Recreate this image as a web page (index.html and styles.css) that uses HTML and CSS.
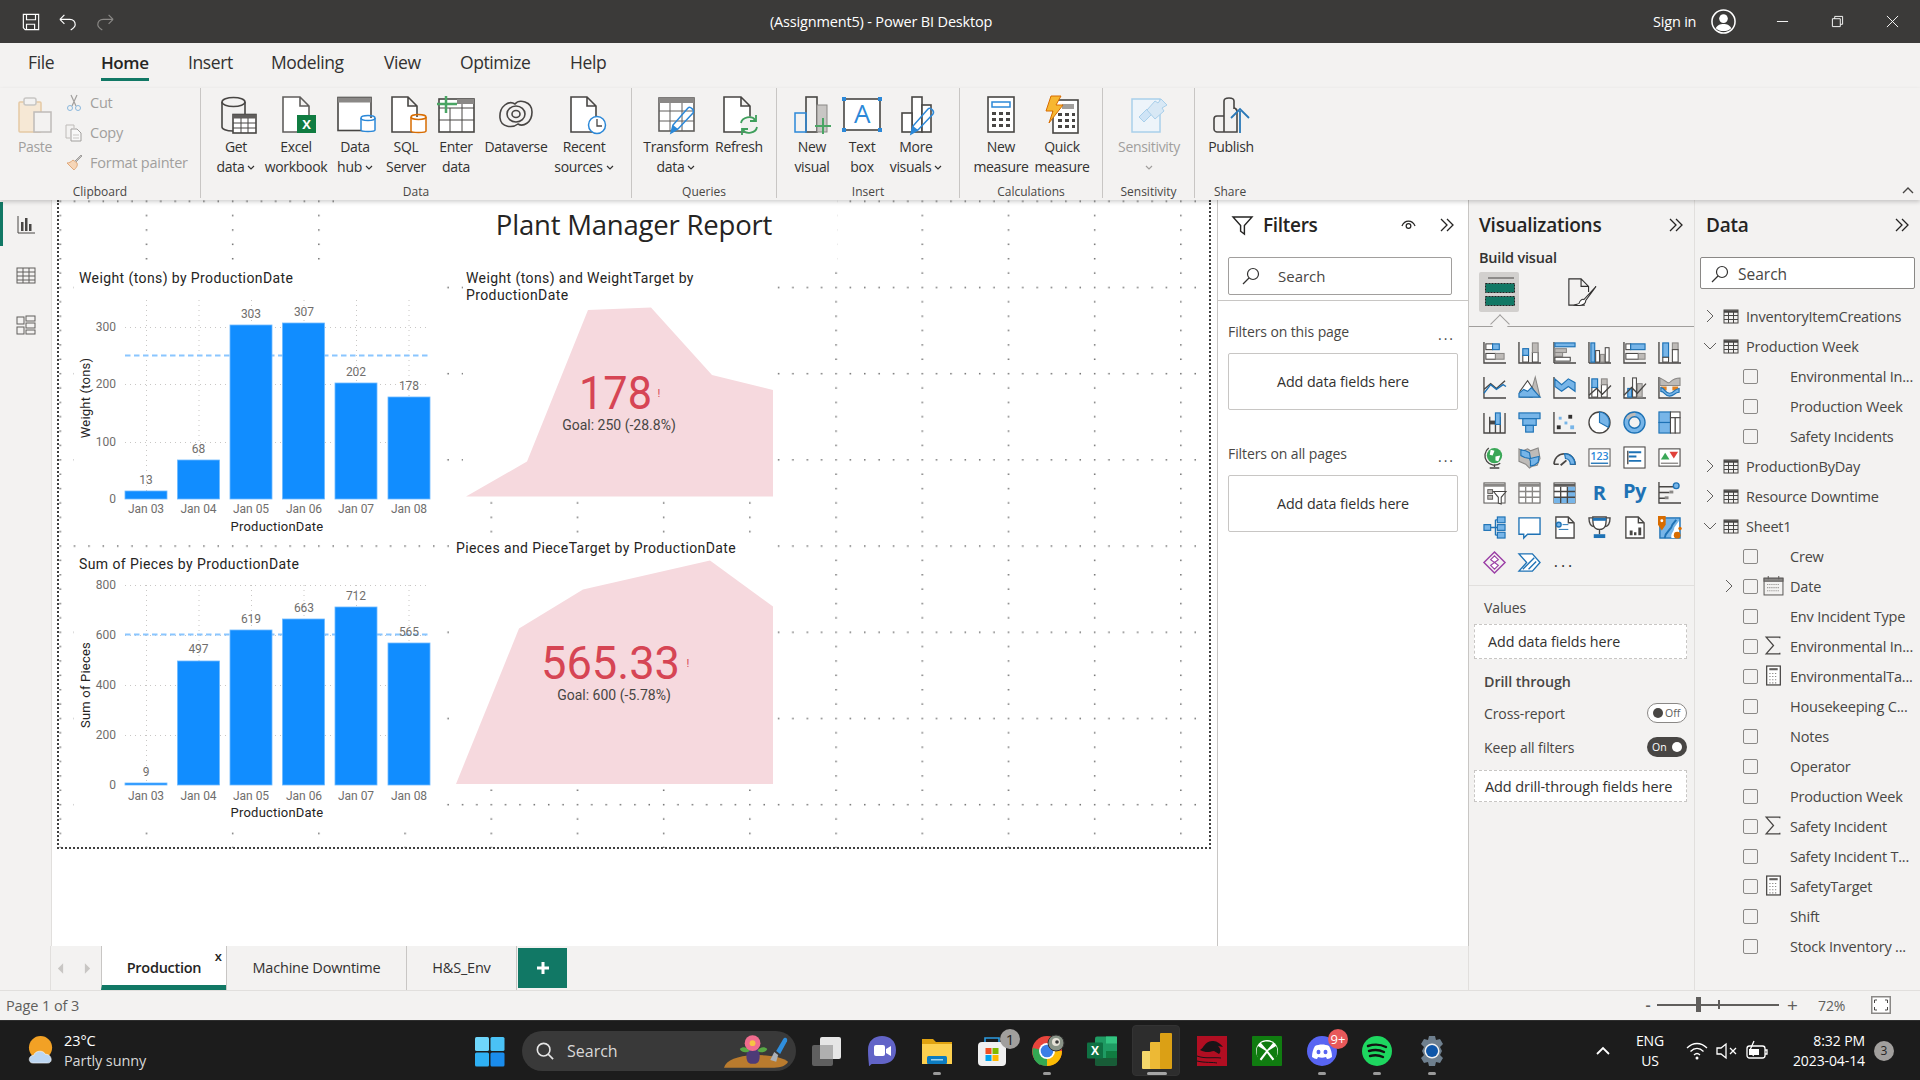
FILE: index.html
```html
<!DOCTYPE html>
<html lang="en">
<head>
<meta charset="utf-8">
<title>(Assignment5) - Power BI Desktop</title>
<link rel="stylesheet" href="styles.css">
</head>
<body>
<header class="titlebar">
  <div class="qat">
    <svg class="qi" viewBox="0 0 20 20"><path d="M1.5 1.5h17v17h-15l-2-2zM5 1.5v6h10v-6M5 18.5v-6h9v6"/></svg>
    <svg class="qi" viewBox="0 0 20 20"><path d="M1 7h11c4 0 6 3 6 6 0 2-2 4-5 6M1 7l5-5M1 7l5 5"/></svg>
    <svg class="qi dim" viewBox="0 0 20 20"><path d="M19 7H8C4 7 2 10 2 13c0 2 2 4 5 6M19 7l-5-5M19 7l-5 5"/></svg>
  </div>
  <div class="wintitle">(Assignment5) - Power BI Desktop</div>
  <div class="winright">
    <span class="signin">Sign in</span>
    <svg class="avatar" viewBox="0 0 26 26"><circle cx="13" cy="13" r="12" fill="none" stroke="#fff" stroke-width="1.6"/><circle cx="13" cy="10" r="4.5" fill="#fff"/><path d="M5 20c2-6 14-6 16 0-4 4-12 4-16 0z" fill="#fff"/></svg>
    <svg class="wb" viewBox="0 0 14 14"><path d="M1 7h12"/></svg>
    <svg class="wb" viewBox="0 0 14 14"><path d="M1.5 4h8.5v8.500H1.500zM4 4V1.500h8.500V10H10"/></svg>
    <svg class="wb" viewBox="0 0 14 14"><path d="M1 1l12 12M13 1L1 13"/></svg>
  </div>
</header>

<nav class="menutabs">
  <span class="mt mt-file">File</span>
  <span class="mt mt-home">Home</span>
  <span class="mt mt-insert">Insert</span>
  <span class="mt mt-modeling">Modeling</span>
  <span class="mt mt-view">View</span>
  <span class="mt mt-optimize">Optimize</span>
  <span class="mt mt-help">Help</span>
</nav>

<section class="ribbon">
  <div class="group g-clip">
    <div class="gbody pad10">
      <div class="rb w50 off">
        <svg class="ri" viewBox="0 0 38 38"><rect x="3" y="6" width="22" height="30" rx="1" fill="#f6e8d5" stroke="#e5c9a4" stroke-width="1.500"/><rect x="8" y="2" width="12" height="7" rx="2" fill="#f3f2f1" stroke="#c8c6c4" stroke-width="1.500"/><rect x="18" y="16" width="17" height="20" fill="#f3f2f1" stroke="#bebbb8" stroke-width="1.500"/></svg>
        <span>Paste</span>
      </div>
      <div class="clipcol off">
        <div class="cliprow"><svg class="si" viewBox="0 0 18 18"><path d="M6 1l5 11M12 1L7 12" stroke="#a19f9d" fill="none" stroke-width="1.200"/><circle cx="5" cy="14" r="2.500" fill="none" stroke="#8ab8dd"/><circle cx="13" cy="14" r="2.500" fill="none" stroke="#8ab8dd"/></svg><span>Cut</span></div>
        <div class="cliprow"><svg class="si" viewBox="0 0 18 18"><path d="M1 1h8v3M1 1v13h4" stroke="#bebbb8" fill="none"/><path d="M6 5h6l4 4v8H6z" fill="#f8f8f8" stroke="#a19f9d"/><path d="M8 11h6M8 14h6" stroke="#c8c6c4"/></svg><span>Copy</span></div>
        <div class="cliprow"><svg class="si" viewBox="0 0 18 18"><path d="M2 9l7 7c2-2 4-4 3-7L8 6C6 8 4 9 2 9z" fill="#f6d6b8" stroke="#e0a87a"/><path d="M10 7l6-6 1 1-6 6" fill="#c8c6c4" stroke="#a19f9d"/></svg><span>Format painter</span></div>
      </div>
    </div>
    <div class="glabel">Clipboard</div>
  </div>

  <div class="group g-data">
    <div class="gbody pad7">
      <div class="rb w56">
        <svg class="ri" viewBox="0 0 38 38"><path class="ik" d="M5 6v25c0 2 4 4 11 4M28 6v12"/><ellipse class="ik" cx="16.500" cy="6" rx="11.500" ry="4.500"/><rect class="ik wf" x="16" y="18.500" width="23" height="18.500"/><rect x="16" y="18.500" width="23" height="4" fill="#605e5c"/><path class="ik thin" d="M16 27h23M16 32h23M24 22v15M31 22v15"/></svg>
        <span>Get<br>data<svg class="chev" viewBox="0 0 8 5"><path d="M1 1l3 3 3-3"/></svg></span>
      </div>
      <div class="rb w64">
        <svg class="ri" viewBox="0 0 38 38"><path class="ik gy wf" d="M6 1h17l9 9v26H6zM23 1v9h9"/><rect x="20" y="19" width="19" height="18" fill="#107c41"/><text class="ixl" x="29.500" y="33">X</text></svg>
        <span>Excel<br>workbook</span>
      </div>
      <div class="rb w54">
        <svg class="ri" viewBox="0 0 38 38"><rect class="ik wf" x="2" y="1.500" width="33" height="33"/><rect x="2" y="1.500" width="33" height="5" fill="#8a8886"/><path class="blue wf" d="M25 22v12c0 2 14 2 14 0V22"/><ellipse class="blue" cx="32" cy="22" rx="7" ry="2.500" fill="#cfe4f6"/></svg>
        <span>Data<br>hub<svg class="chev" viewBox="0 0 8 5"><path d="M1 1l3 3 3-3"/></svg></span>
      </div>
      <div class="rb w48">
        <svg class="ri" viewBox="0 0 38 38"><path class="ik wf" d="M5 1h16l9 9v26H5zM21 1v9h9"/><path class="or wf" d="M24 21v14c0 2 15 2 15 0V21"/><ellipse class="or" cx="31.500" cy="21" rx="7.500" ry="2.500" fill="#fbe3cc"/></svg>
        <span>SQL<br>Server</span>
      </div>
      <div class="rb w52">
        <svg class="ri" viewBox="0 0 38 38"><rect class="ik wf" x="2" y="3" width="35" height="33"/><rect x="20" y="3" width="17" height="5" fill="#8a8886"/><path class="ik thin" d="M2 12h35M2 24h35M13 12v24M25 8v28"/><path d="M9 0v17M0 8h20" stroke="#4aa564" stroke-width="2.500" fill="none"/></svg>
        <span>Enter<br>data</span>
      </div>
      <div class="rb w68">
        <svg class="ri" viewBox="0 0 38 38"><path class="ik" d="M3 22C2 10 12 4 18 8c4-5 17-3 17 8 0 11-9 15-14 12-5 4-17 4-18-6z"/><ellipse class="ik" cx="19" cy="18" rx="9" ry="8"/><ellipse class="ik" cx="19" cy="18" rx="4" ry="3.500"/></svg>
        <span>Dataverse</span>
      </div>
      <div class="rb w68">
        <svg class="ri" viewBox="0 0 38 38"><path class="ik wf" d="M6 1h16l9 9v26H6zM22 1v9h9"/><circle class="blue wf" cx="32" cy="29" r="8.500"/><path d="M32 23v7h5" stroke="#484644" stroke-width="1.300" fill="none"/></svg>
        <span>Recent<br>sources<svg class="chev" viewBox="0 0 8 5"><path d="M1 1l3 3 3-3"/></svg></span>
      </div>
    </div>
    <div class="glabel">Data</div>
  </div>

  <div class="group g-query">
    <div class="gbody pad6">
      <div class="rb w76">
        <svg class="ri" viewBox="0 0 38 38"><rect class="ik wf gy" x="2" y="2" width="35" height="33"/><rect x="2" y="2" width="35" height="5" fill="#8a8886"/><path class="ik thin gy" d="M2 15h35M2 25h35M13 7v28M25 7v28"/><path class="blue" d="M14 37l2-8 15-17c2-2 7 2 5 5L21 33z" fill="#cfe4f6"/><path d="M14 37l2-8 5 4z" fill="#2b88d8"/></svg>
        <span>Transform<br>data<svg class="chev" viewBox="0 0 8 5"><path d="M1 1l3 3 3-3"/></svg></span>
      </div>
      <div class="rb w50">
        <svg class="ri" viewBox="0 0 38 38"><path class="ik wf" d="M4 1h17l9 9v26H4zM21 1v9h9"/><circle cx="29" cy="29" r="8.500" fill="#f3f2f1"/><path class="gr" d="M21 27c1-6 11-8 14-3M37 31c-1 6-11 8-14 3"/><path class="gr" d="M36 19v6h-6M22 39v-6h6"/></svg>
        <span>Refresh</span>
      </div>
    </div>
    <div class="glabel">Queries</div>
  </div>

  <div class="group g-insert">
    <div class="gbody pad10">
      <div class="rb w50">
        <svg class="ri" viewBox="0 0 38 38"><rect class="ik" x="13" y="1" width="11" height="35" fill="#fff"/><rect x="24" y="9" width="10" height="27" fill="#c8c6c4" stroke="#8a8886"/><rect class="blue" x="2" y="17" width="11" height="19" fill="#77b5e8"/><path d="M30 22v16M22 30h16" stroke="#4aa564" stroke-width="2" fill="none"/></svg>
        <span>New<br>visual</span>
      </div>
      <div class="rb w50">
        <svg class="ri" viewBox="0 0 38 38"><rect class="ik wf" x="1" y="3" width="36" height="31"/><rect x="-1" y="1" width="4" height="4" fill="#2b88d8"/><rect x="35" y="1" width="4" height="4" fill="#2b88d8"/><rect x="-1" y="32" width="4" height="4" fill="#2b88d8"/><rect x="35" y="32" width="4" height="4" fill="#2b88d8"/><text class="ia" x="19" y="27">A</text></svg>
        <span>Text<br>box</span>
      </div>
      <div class="rb w58">
        <svg class="ri" viewBox="0 0 38 38"><rect class="ik wf" x="15" y="1" width="10" height="35"/><rect class="ik wf" x="25" y="9" width="9" height="27"/><rect class="ik wf" x="5" y="17" width="10" height="19"/><path class="blue" d="M14 38l2-8 15-17c2-2 7 2 5 5L21 34z" fill="#cfe4f6"/><path d="M14 38l2-8 5 4z" fill="#2b88d8"/></svg>
        <span>More<br>visuals<svg class="chev" viewBox="0 0 8 5"><path d="M1 1l3 3 3-3"/></svg></span>
      </div>
    </div>
    <div class="glabel">Insert</div>
  </div>

  <div class="group g-calc">
    <div class="gbody pad10">
      <div class="rb w62">
        <svg class="ri" viewBox="0 0 38 38"><rect x="6" y="1" width="26" height="35" fill="#fff" stroke="#484644" stroke-width="1.600"/><rect class="blue" x="10" y="6" width="18" height="5" fill="#77b5e8"/><path d="M10 16h4v3h-4zM17 16h4v3h-4zM24 16h4v3h-4zM10 22h4v3h-4zM17 22h4v3h-4zM24 22h4v3h-4zM10 28h4v3h-4zM17 28h4v3h-4zM24 28h4v3h-4z" fill="#484644"/></svg>
        <span>New<br>measure</span>
      </div>
      <div class="rb w60">
        <svg class="ri" viewBox="0 0 38 38"><rect x="10" y="4" width="25" height="33" fill="#fff" stroke="#484644" stroke-width="1.600"/><rect x="19" y="8" width="12" height="5" fill="#a19f9d"/><path d="M15 17h4v3h-4zM22 17h4v3h-4zM29 17h3v3h-3zM15 23h4v3h-4zM22 23h4v3h-4zM29 23h3v3h-3zM15 29h4v3h-4zM22 29h4v3h-4zM29 29h3v3h-3z" fill="#484644"/><path d="M8 0h10l-5 9h7L6 27l4-12H3z" fill="#f7b731" stroke="#d86c00"/></svg>
        <span>Quick<br>measure</span>
      </div>
    </div>
    <div class="glabel">Calculations</div>
  </div>

  <div class="group g-sens">
    <div class="gbody pad5">
      <div class="rb w82 off">
        <svg class="ri" viewBox="0 0 38 38"><path d="M2 3h28v33H2z" fill="#edf4fa" stroke="#a9cfea" stroke-width="1.500"/><path d="M9 21l8-8 5 5-8 8z" fill="#cfe4f6" stroke="#a9cfea"/><path d="M17 14l8-9 3 2 3-4 6 6-5 3 2 3-9 8z" fill="#d8e8f5" stroke="#a9cfea"/></svg>
        <span>Sensitivity<br><svg class="chev" viewBox="0 0 8 5"><path d="M1 1l3 3 3-3"/></svg></span>
      </div>
    </div>
    <div class="glabel">Sensitivity</div>
  </div>

  <div class="group g-share">
    <div class="gbody pad6">
      <div class="rb w60">
        <svg class="ri" viewBox="0 0 38 38"><path class="ik" d="M12 20V5c0-4 10-4 10 0v8M12 20H5c-3 0-3 2-3 3v10c0 2 2 3 3 3h20V15c0-3-3-3-3-2"/><path class="ik" d="M12 20v16"/><path d="M28 37V15M19 22l9-9 9 9" stroke="#2b79b8" stroke-width="1.800" fill="none"/></svg>
        <span>Publish</span>
      </div>
    </div>
    <div class="glabel">Share</div>
  </div>
  <svg class="collapse" viewBox="0 0 12 8"><path d="M1 7l5-5 5 5"/></svg>
</section>

<main class="workspace">
  <div class="mainleft">
    <div class="mainrow">
      <aside class="rail">
        <div class="railitem active"><svg class="rali" viewBox="0 0 20 20"><path d="M2 1v17h17" stroke="#484644" fill="none"/><path d="M5 7h2.500v9H5zM9 3h2.500v13H9zM13 9h2.500v7H13z" fill="#484644"/></svg></div>
        <div class="railitem"><svg class="rali" viewBox="0 0 20 20"><rect x="1" y="3" width="18" height="15" fill="none" stroke="#605e5c"/><path d="M1 7h18M1 11h18M1 15h18M7 3v15M13 3v15" stroke="#605e5c" fill="none"/></svg></div>
        <div class="railitem"><svg class="rali" viewBox="0 0 20 20"><g fill="#f3f2f1" stroke="#605e5c"><rect x="1" y="2" width="7" height="7"/><rect x="10" y="1" width="9" height="5"/><rect x="10" y="8" width="9" height="5"/><rect x="1" y="12" width="7" height="7"/><rect x="10" y="15" width="9" height="4"/></g></svg></div>
      </aside>

      <div class="canvasarea">
        <div class="canvas">
          <svg class="grid" width="1150" height="648" aria-hidden="true">
            <defs>
              <pattern id="dots" x="0.500" y="0.500" width="86.200" height="86.200" patternUnits="userSpaceOnUse">
                <g fill="#6e6e6e">
                  <rect x="0" y="0" width="1.500" height="1.500"/><rect x="14.370" y="0" width="1.500" height="1.500"/><rect x="28.730" y="0" width="1.500" height="1.500"/><rect x="43.100" y="0" width="1.500" height="1.500"/><rect x="57.470" y="0" width="1.500" height="1.500"/><rect x="71.830" y="0" width="1.500" height="1.500"/>
                  <rect x="0" y="14.370" width="1.500" height="1.500"/><rect x="0" y="28.730" width="1.500" height="1.500"/><rect x="0" y="43.100" width="1.500" height="1.500"/><rect x="0" y="57.470" width="1.500" height="1.500"/><rect x="0" y="71.830" width="1.500" height="1.500"/>
                </g>
              </pattern>
            </defs>
            <rect width="1150" height="648" fill="url(#dots)"/>
          </svg>
          <h1 class="reporttitle">Plant Manager Report</h1>

          <svg class="visual v-c1" viewBox="74 262 372 276">
            <text class="vt" x="79" y="283">Weight (tons) by ProductionDate</text>
            <path class="gl" d="M125 327.500h303M125 384.500h303M125 442.500h303M146.500 300v199M199 300v199M251.500 300v199M304 300v199M356.500 300v199M409 300v199"/>
            <g class="yl"><text x="116" y="331">300</text><text x="116" y="388">200</text><text x="116" y="446">100</text><text x="116" y="503">0</text></g>
            <path class="dash" d="M125 355.500h303"/>
            <g class="bar"><rect x="125" y="491" width="42" height="8"/><rect x="177.500" y="460" width="42" height="39"/><rect x="230" y="325" width="42" height="174"/><rect x="282.500" y="323" width="42" height="176"/><rect x="335" y="383" width="42" height="116"/><rect x="388" y="397" width="42" height="102"/></g>
            <g class="lb"><text x="146" y="484">13</text><text x="198.500" y="453">68</text><text x="251" y="318">303</text><text x="304" y="316">307</text><text x="356" y="376">202</text><text x="409" y="390">178</text></g>
            <g class="xl"><text x="146" y="513">Jan 03</text><text x="198.500" y="513">Jan 04</text><text x="251" y="513">Jan 05</text><text x="304" y="513">Jan 06</text><text x="356" y="513">Jan 07</text><text x="409" y="513">Jan 08</text></g>
            <text class="at mid" x="277" y="531">ProductionDate</text>
            <text class="at mid" transform="translate(90 398) rotate(-90)">Weight (tons)</text>
          </svg>

          <svg class="visual v-c2" viewBox="74 552 372 273">
            <text class="vt" x="79" y="569">Sum of Pieces by ProductionDate</text>
            <path class="gl" d="M125 585.500h303M125 635.500h303M125 685.500h303M125 735.500h303M146.500 585v200M199 585v200M251.500 585v200M304 585v200M356.500 585v200M409 585v200"/>
            <g class="yl"><text x="116" y="589">800</text><text x="116" y="639">600</text><text x="116" y="689">400</text><text x="116" y="739">200</text><text x="116" y="789">0</text></g>
            <path class="dash" d="M125 634.500h303"/>
            <g class="bar"><rect x="125" y="783" width="42" height="2"/><rect x="177.500" y="661" width="42" height="124"/><rect x="230" y="630" width="42" height="155"/><rect x="282.500" y="619" width="42" height="166"/><rect x="335" y="607" width="42" height="178"/><rect x="388" y="643" width="42" height="142"/></g>
            <g class="lb"><text x="146" y="776">9</text><text x="198.500" y="653">497</text><text x="251" y="623">619</text><text x="304" y="612">663</text><text x="356" y="600">712</text><text x="409" y="636">565</text></g>
            <g class="xl"><text x="146" y="800">Jan 03</text><text x="198.500" y="800">Jan 04</text><text x="251" y="800">Jan 05</text><text x="304" y="800">Jan 06</text><text x="356" y="800">Jan 07</text><text x="409" y="800">Jan 08</text></g>
            <text class="at mid" x="277" y="817">ProductionDate</text>
            <text class="at mid" transform="translate(90 685) rotate(-90)">Sum of Pieces</text>
          </svg>

          <svg class="visual v-k1" viewBox="463 262 313 238">
            <text class="vt" x="466" y="283">Weight (tons) and WeightTarget by</text>
            <text class="vt" x="466" y="300">ProductionDate</text>
            <polygon class="area" points="466,496.500 527,461.500 588,310 651,307.500 712,375 773,390 773,496.500"/>
            <text class="kpi" x="615.500" y="409" textLength="73" lengthAdjust="spacingAndGlyphs">178</text>
            <text class="bang" x="659" y="397">!</text>
            <text class="goal" x="619" y="430">Goal: 250 (-28.8%)</text>
          </svg>

          <svg class="visual v-k2" viewBox="452 537 324 250">
            <text class="vt" x="456" y="553">Pieces and PieceTarget by ProductionDate</text>
            <polygon class="area" points="456,784 519,628.500 583,589.500 710,560.500 773,606.500 773,784"/>
            <text class="kpi" x="610.500" y="679" textLength="139" lengthAdjust="spacingAndGlyphs">565.33</text>
            <text class="bang" x="688" y="667">!</text>
            <text class="goal" x="614" y="700">Goal: 600 (-5.78%)</text>
          </svg>
        </div>
      </div>

      <aside class="filters">
        <div class="fhead">
          <svg class="funnel" viewBox="0 0 22 20"><path d="M1 1h20l-8 9v9l-4-3v-6z"/></svg>
          <span class="ftitle">Filters</span>
          <svg class="eye" viewBox="0 0 16 12"><path d="M1 7c3-7 11-7 14 0"/><circle cx="8" cy="7" r="2.500"/></svg>
          <svg class="dchev" viewBox="0 0 16 14"><path d="M2 1l6 6-6 6M8 1l6 6-6 6"/></svg>
        </div>
        <div class="fsearchwrap">
          <div class="fsearch"><svg class="mag" viewBox="0 0 18 18"><circle cx="11" cy="7" r="5.500"/><path d="M7 11l-6 6"/></svg><span>Search</span></div>
        </div>
        <div class="flabel fl1"><span>Filters on this page</span><b>...</b></div>
        <div class="fbox">Add data fields here</div>
        <div class="flabel fl2"><span>Filters on all pages</span><b>...</b></div>
        <div class="fbox">Add data fields here</div>
      </aside>
    </div>

    <div class="pagetabs">
      <div class="ptrail"></div>
      <div class="ptnav">
        <svg viewBox="0 0 8 12"><path d="M7 0v12L1 6z"/></svg>
        <svg viewBox="0 0 8 12"><path d="M1 0v12l6-6z"/></svg>
      </div>
      <div class="ptab cur">Production<span class="ptx">x</span></div>
      <div class="ptab t2">Machine Downtime</div>
      <div class="ptab t3">H&amp;S_Env</div>
      <div class="ptadd"><svg viewBox="0 0 14 14"><path d="M7 1v12M1 7h12"/></svg></div>
    </div>
  </div>

  <aside class="viz">
    <div class="phead"><span class="ptitle">Visualizations</span><svg class="dchev" viewBox="0 0 16 14"><path d="M2 1l6 6-6 6M8 1l6 6-6 6"/></svg></div>
    <div class="buildlabel">Build visual</div>
    <div class="panetabs">
      <div class="panesel"><svg viewBox="0 0 32 32"><path d="M5 2h26" stroke="#484644" fill="none"/><rect x="2.500" y="7.500" width="29" height="9" fill="#117865" stroke="#222" stroke-dasharray="2 1"/><rect x="2.500" y="20.500" width="29" height="9" fill="#117865" stroke="#222" stroke-dasharray="2 1"/></svg></div>
      <svg class="panefmt" viewBox="0 0 32 32"><path d="M19 30H2V2h13l8 8v6M15 2v8h8" fill="none" stroke="#323130" stroke-width="1.200"/><path d="M31 10L18 24c-2-1-5 2-5 4-1 1-3 1-5 2 5 1 12 0 12-5z" fill="#fff" stroke="#323130" stroke-width="1.100"/></svg>
      <span class="caret"></span>
    </div>

    <div class="vgrid">
      <svg class="vi" viewBox="0 0 24 24"><path class="k" d="M1 1v22h23"/><rect class="fw" x="3" y="3" width="7" height="6"/><rect class="fb" x="10" y="3" width="7" height="6"/><rect class="fw" x="3" y="13" width="10" height="6"/><rect class="fg" x="13" y="13" width="9" height="6"/></svg>
      <svg class="vi" viewBox="0 0 24 24"><path class="k" d="M1 1v22h23"/><rect class="fw" x="5" y="15" width="6" height="7"/><rect class="fb" x="5" y="8" width="6" height="7"/><rect class="fw" x="15" y="12" width="6" height="10"/><rect class="fg" x="15" y="2" width="6" height="10"/></svg>
      <svg class="vi" viewBox="0 0 24 24"><path class="k" d="M1 23h23M1 1v22"/><rect class="fb" x="2" y="2" width="21" height="4"/><rect class="fg" x="2" y="8" width="12" height="4"/><rect class="fg" x="2" y="12" width="8" height="4"/><rect class="fw" x="2" y="17" width="16" height="4"/></svg>
      <svg class="vi" viewBox="0 0 24 24"><path class="k" d="M1 23h23M1 1v22"/><rect class="fb" x="3" y="2" width="4" height="20"/><rect class="fw" x="8" y="10" width="4" height="12"/><rect class="fg" x="13" y="14" width="4" height="8"/><rect class="fw" x="18" y="7" width="4" height="15"/></svg>
      <svg class="vi" viewBox="0 0 24 24"><path class="k" d="M1 1v22h23"/><rect class="fw" x="3" y="3" width="5" height="6"/><rect class="fb" x="8" y="3" width="15" height="6"/><rect class="fw" x="3" y="13" width="13" height="6"/><rect class="fg" x="16" y="13" width="7" height="6"/></svg>
      <svg class="vi" viewBox="0 0 24 24"><path class="k" d="M1 1v22h23"/><rect class="fb" x="5" y="2" width="6" height="15"/><rect class="fw" x="5" y="17" width="6" height="5"/><rect class="fg" x="15" y="2" width="6" height="7"/><rect class="fw" x="15" y="9" width="6" height="13"/></svg>

      <svg class="vi" viewBox="0 0 24 24"><path class="k" d="M1 1v22h23M1 14l7-6 6 5 9-8"/><path class="b" d="M1 18l7-9 6 5 7-5 3 2"/></svg>
      <svg class="vi" viewBox="0 0 24 24"><path class="fg" d="M12 22l6-21 5 21z"/><path class="fw" d="M2 16l8-11 8 12-3 5H2z"/><path class="fb" d="M1 22v-4l5-4 4 2 4-4 9 10z"/></svg>
      <svg class="vi" viewBox="0 0 24 24"><path class="k" d="M1 1v22h23"/><path class="fb" d="M2 3l7 6 7-6 7 4v9l-7-5-7 5-7-5z"/></svg>
      <svg class="vi" viewBox="0 0 24 24"><path class="k" d="M1 1v22h23"/><rect class="fw" x="4" y="12" width="6" height="10"/><rect class="fb" x="4" y="3" width="6" height="9"/><rect class="fw" x="14" y="9" width="6" height="13"/><rect class="fg" x="14" y="3" width="6" height="6"/><path class="k" d="M1 20l8-7 6 6 9-9"/></svg>
      <svg class="vi" viewBox="0 0 24 24"><path class="k" d="M1 1v22h23"/><rect class="fb" x="5" y="13" width="4" height="9"/><rect class="fw" x="10" y="2" width="4" height="20"/><rect class="fg" x="15" y="8" width="5" height="14"/><path class="k" d="M1 20l8-8 6 6 9-10"/></svg>
      <svg class="vi" viewBox="0 0 24 24"><path class="k" d="M1 1v22h23"/><path class="fg" d="M2 2c7 3 8 7 11 4s5-4 10-4v8H2z"/><rect x="3" y="11" width="6" height="4" fill="#e08020"/><rect x="15" y="11" width="6" height="4" fill="#e08020"/><path class="fb" d="M3 12c5 1 4 6 9 6s4-4 10-5v4c-5 0-5 4-10 4s-5-5-9-5z"/></svg>

      <svg class="vi" viewBox="0 0 24 24"><path class="k" d="M1 2v21h22V2M7 23V6M13 23V12M18 23V6"/><rect x="7" y="10" width="6" height="4" fill="#484644"/><rect class="fb" x="13" y="2" width="5" height="12"/></svg>
      <svg class="vi" viewBox="0 0 24 24"><rect class="fb" x="1" y="2" width="22" height="6"/><rect class="fb" x="5" y="8" width="14" height="7"/><rect class="fb" x="8" y="15" width="8" height="7"/></svg>
      <svg class="vi" viewBox="0 0 24 24"><path class="k" d="M1 1v22h23"/><rect x="4" y="15" width="4" height="4" fill="#323130"/><rect x="16" y="4" width="4" height="4" fill="#323130"/><rect x="6" y="6" width="3" height="3" fill="#77b5e8"/><rect x="12" y="11" width="3" height="3" fill="#77b5e8"/><rect x="18" y="15" width="4" height="4" fill="#77b5e8"/></svg>
      <svg class="vi" viewBox="0 0 24 24"><circle class="k wfill" cx="12" cy="12" r="11"/><path class="fb" d="M12 1a11 11 0 0 1 9 16l-9-5z"/></svg>
      <svg class="vi" viewBox="0 0 24 24"><circle cx="12" cy="12" r="8.500" fill="none" stroke="#77b5e8" stroke-width="5"/><path d="M4 8a9 9 0 0 1 9-4.500" fill="none" stroke="#bebbb8" stroke-width="5"/><circle class="b" cx="12" cy="12" r="11"/><circle class="b" cx="12" cy="12" r="6"/></svg>
      <svg class="vi" viewBox="0 0 24 24"><rect class="fb" x="1" y="1" width="12" height="11"/><rect class="fb" x="1" y="12" width="12" height="11"/><rect class="fw" x="13" y="1" width="10" height="6"/><rect class="fw" x="13" y="7" width="5" height="16"/><rect class="fw" x="18" y="7" width="5" height="16"/></svg>

      <svg class="vi" viewBox="0 0 24 24"><circle cx="12" cy="10" r="8" fill="#3aa757"/><path d="M8 4l4 1-2 5-3-1zM13 11l5-1-2 6-3-1z" fill="#fff"/><path class="k" d="M6 2a10 10 0 0 0 12 16M12 19v3M7 23h10"/></svg>
      <svg class="vi" viewBox="0 0 24 24"><path class="fg" d="M1 3l4 2 5-2 3 2 8-3 2 11-3 7-5 1-3 2-4-4-7-3z"/><path class="fb" d="M3 4l5 1 4 2 1 6 4-1 5-1-1 6-4 3-4 1v-5l-1-3-5-1-4-2z"/></svg>
      <svg class="vi" viewBox="0 0 24 24"><path class="k th16" d="M1 19a11 11 0 0 1 22 0h-5M1 19h5"/><path class="fb" d="M12 8a11 11 0 0 1 11 11h-5a6 6 0 0 0-5-6z"/><path class="k th2" d="M8 20l6-5"/></svg>
      <svg class="vi" viewBox="0 0 24 24"><rect class="fw gs" x="1" y="3" width="22" height="18"/><text class="v123" x="12" y="15">123</text><path class="b" d="M3 18h18"/></svg>
      <svg class="vi" viewBox="0 0 24 24"><rect class="fw" x="1" y="1" width="22" height="22"/><path class="k" d="M5 5v14"/><path d="M6 6.500h13M6 11h8M6 15.500h13" stroke="#1e72b5" stroke-width="2" fill="none"/></svg>
      <svg class="vi" viewBox="0 0 24 24"><rect class="fw" x="1" y="3" width="22" height="18"/><path d="M3 14l4.500-7 4.500 7z" fill="#3aa757"/><path d="M12 6h9l-4.500 7z" fill="#e0403a"/><path class="k lg" d="M3 18h18"/></svg>

      <svg class="vi" viewBox="0 0 24 24"><rect class="fw gs" x="1" y="2" width="22" height="21"/><path d="M1 3h22v3H1z" fill="#8a8886"/><rect x="5" y="9" width="5" height="4" fill="#bebbb8" stroke="#605e5c"/><rect x="5" y="15" width="5" height="4" fill="#bebbb8" stroke="#605e5c"/><path class="fw" d="M11 11h13l-5 6v7l-3-1v-6z"/></svg>
      <svg class="vi" viewBox="0 0 24 24"><rect class="fw gs" x="1" y="2" width="22" height="21"/><path d="M1 3h22v3H1z" fill="#8a8886"/><path class="k lg" d="M1 11h22M1 17h22M8 6v17M15 6v17"/></svg>
      <svg class="vi" viewBox="0 0 24 24"><rect x="1" y="2" width="22" height="21" fill="#fff" stroke="#484644"/><path d="M1 3h22v3H1z" fill="#605e5c"/><path d="M1 17h7v6H1zM8 17h7v6H8zM15 6h8v17h-8z" fill="#77b5e8"/><path class="k" d="M1 11h22M1 17h22M8 6v17M15 6v17"/></svg>
      <svg class="vi" viewBox="0 0 24 24"><text class="vr" x="12" y="20">R</text></svg>
      <svg class="vi" viewBox="0 0 24 24"><text class="vpy" x="12" y="18">Py</text></svg>
      <svg class="vi" viewBox="0 0 24 24"><path class="k" d="M1 1v22h23M1 6h15M1 12h11M1 18h7"/><circle class="b lf" cx="19" cy="5" r="3"/><rect x="12" y="10" width="4" height="3" fill="#8a8886"/><rect x="7" y="16" width="4" height="3" fill="#8a8886"/></svg>

      <svg class="vi" viewBox="0 0 24 24"><rect class="fb" x="1" y="9" width="7" height="6"/><path class="b" d="M8 12h5M13 4v16M13 4h2M13 12h2M13 20h2"/><rect class="fb" x="15" y="1" width="8" height="6"/><rect class="fb" x="15" y="9" width="8" height="6"/><rect class="fb" x="15" y="17" width="8" height="6"/></svg>
      <svg class="vi" viewBox="0 0 24 24"><path class="b wfill" d="M1 2h22v17H10l-4 4v-4H1z"/></svg>
      <svg class="vi" viewBox="0 0 24 24"><path class="k wfill" d="M3 1h13l6 6v16H3zM16 1v6h6"/><circle class="b lf" cx="6" cy="9" r="2.500"/><path d="M10 9h6M6 14h10" stroke="#1e72b5" fill="none"/></svg>
      <svg class="vi" viewBox="0 0 24 24"><path class="k" d="M5 2H1c0 6 2 9 6 9M19 2h4c0 6-2 9-6 9"/><path class="k wfill" d="M5 1h14c0 7 0 13-7 13S5 8 5 1zM12 14v5"/><path d="M5 2h14v3H5z" fill="#1e72b5"/><path d="M6 19h12v4H6z" fill="#1e72b5"/></svg>
      <svg class="vi" viewBox="0 0 24 24"><path class="k wfill" d="M3 1h13l6 6v16H3zM16 1v6h6"/><path d="M7 15h3v5H7zM11.500 17H14v3h-2.500zM16 12h3v8h-3z" fill="#484644"/></svg>
      <svg class="vi" viewBox="0 0 24 24"><rect class="b lf" x="2" y="2" width="21" height="21"/><path d="M14 23c-1-6 3-6 3-11l5-7v18z" fill="#fff"/><path d="M7 23c1-8 7-8 8-14l4-5" fill="none" stroke="#1e72b5" stroke-width="2"/><path d="M0 0h8v9l-4 6-4-6z" fill="#d86c00"/><circle cx="4" cy="5" r="1.500" fill="#fff"/><circle cx="20" cy="20" r="3.500" fill="#d86c00"/><circle cx="23" cy="13" r="1.800" fill="#d86c00"/></svg>

      <svg class="vi" viewBox="0 0 24 24"><path d="M12 1l11 11-11 11L1 12z" fill="none" stroke="#9b3fa6" stroke-width="1.500"/><path d="M12 5l4 4-4 3-4-3zM12 12l4 3-4 4-4-4z" fill="#fff" stroke="#9b3fa6" stroke-width="1.200"/></svg>
      <svg class="vi" viewBox="0 0 24 24"><path class="b wfill" d="M1 3h14l8 9-8 9H1l8-9z"/><path class="b" d="M5 19l12-12M11 19l8-8"/></svg>
      <div class="vmore">...</div>
    </div>

    <div class="vfields">
      <div class="vlabel">Values</div>
      <div class="drop d1">Add data fields here</div>
      <div class="vlabel drillh">Drill through</div>
      <div class="togrow r1"><span>Cross-report</span><span class="toggle offt"><i></i>Off</span></div>
      <div class="togrow r2"><span>Keep all filters</span><span class="toggle ont">On<i></i></span></div>
      <div class="drop d2">Add drill-through fields here</div>
    </div>
  </aside>

  <aside class="data">
    <div class="phead"><span class="ptitle dtitle">Data</span><svg class="dchev" viewBox="0 0 16 14"><path d="M2 1l6 6-6 6M8 1l6 6-6 6"/></svg></div>
    <div class="dsearch"><svg class="mag" viewBox="0 0 18 18"><circle cx="11" cy="7" r="5.500"/><path d="M7 11l-6 6"/></svg><span>Search</span></div>
    <ul class="tree">
      <li class="trow"><svg class="tw" viewBox="0 0 12 14"><path d="M3 1l6 6-6 6"/></svg><svg class="tbl" viewBox="0 0 16 16"><rect x="1" y="2" width="14" height="13"/><path d="M1 3.500h14" class="hdr"/><path d="M1 7.500h14M1 11.500h14M5.500 3v12M10.500 3v12"/></svg><span>InventoryItemCreations</span></li>
      <li class="trow"><svg class="tw open" viewBox="0 0 14 12"><path d="M1 3l6 6 6-6"/></svg><svg class="tbl" viewBox="0 0 16 16"><rect x="1" y="2" width="14" height="13"/><path d="M1 3.500h14" class="hdr"/><path d="M1 7.500h14M1 11.500h14M5.500 3v12M10.500 3v12"/></svg><span>Production Week</span></li>
      <li class="frow"><i class="cb"></i><b class="fi"></b><span>Environmental In...</span></li>
      <li class="frow"><i class="cb"></i><b class="fi"></b><span>Production Week</span></li>
      <li class="frow"><i class="cb"></i><b class="fi"></b><span>Safety Incidents</span></li>
      <li class="trow"><svg class="tw" viewBox="0 0 12 14"><path d="M3 1l6 6-6 6"/></svg><svg class="tbl" viewBox="0 0 16 16"><rect x="1" y="2" width="14" height="13"/><path d="M1 3.500h14" class="hdr"/><path d="M1 7.500h14M1 11.500h14M5.500 3v12M10.500 3v12"/></svg><span>ProductionByDay</span></li>
      <li class="trow"><svg class="tw" viewBox="0 0 12 14"><path d="M3 1l6 6-6 6"/></svg><svg class="tbl" viewBox="0 0 16 16"><rect x="1" y="2" width="14" height="13"/><path d="M1 3.500h14" class="hdr"/><path d="M1 7.500h14M1 11.500h14M5.500 3v12M10.500 3v12"/></svg><span>Resource Downtime</span></li>
      <li class="trow"><svg class="tw open" viewBox="0 0 14 12"><path d="M1 3l6 6 6-6"/></svg><svg class="tbl" viewBox="0 0 16 16"><rect x="1" y="2" width="14" height="13"/><path d="M1 3.500h14" class="hdr"/><path d="M1 7.500h14M1 11.500h14M5.500 3v12M10.500 3v12"/></svg><span>Sheet1</span></li>
      <li class="frow"><i class="cb"></i><b class="fi"></b><span>Crew</span></li>
      <li class="frow hasch"><svg class="tw" viewBox="0 0 12 14"><path d="M3 1l6 6-6 6"/></svg><i class="cb"></i><b class="fi"><svg viewBox="0 0 20 20"><rect x="1" y="3" width="18" height="16" fill="none" stroke="#605e5c"/><path d="M1 3h18v3H1zM5 1v3M15 1v3" fill="#8a8886" stroke="#605e5c"/><path d="M4 9h12M4 12h12M4 15h12" stroke="#8a8886" stroke-dasharray="1 1"/></svg></b><span>Date</span></li>
      <li class="frow"><i class="cb"></i><b class="fi"></b><span>Env Incident Type</span></li>
      <li class="frow"><i class="cb"></i><b class="fi"><svg viewBox="0 0 20 20"><path d="M16 3V2H3l7 8-7 8h13v-1" fill="none" stroke="#484644" stroke-width="1.200"/></svg></b><span>Environmental In...</span></li>
      <li class="frow"><i class="cb"></i><b class="fi"><svg viewBox="0 0 20 20"><rect x="3.500" y="1" width="13" height="18" fill="#fff" stroke="#484644" stroke-width="1.200"/><rect x="6" y="3" width="8" height="2" fill="#605e5c"/><path d="M6 8h8M6 11h8M6 14h8M6 17h8" stroke="#8a8886" stroke-dasharray="1.200 1.500"/></svg></b><span>EnvironmentalTa...</span></li>
      <li class="frow"><i class="cb"></i><b class="fi"></b><span>Housekeeping C...</span></li>
      <li class="frow"><i class="cb"></i><b class="fi"></b><span>Notes</span></li>
      <li class="frow"><i class="cb"></i><b class="fi"></b><span>Operator</span></li>
      <li class="frow"><i class="cb"></i><b class="fi"></b><span>Production Week</span></li>
      <li class="frow"><i class="cb"></i><b class="fi"><svg viewBox="0 0 20 20"><path d="M16 3V2H3l7 8-7 8h13v-1" fill="none" stroke="#484644" stroke-width="1.200"/></svg></b><span>Safety Incident</span></li>
      <li class="frow"><i class="cb"></i><b class="fi"></b><span>Safety Incident T...</span></li>
      <li class="frow"><i class="cb"></i><b class="fi"><svg viewBox="0 0 20 20"><rect x="3.500" y="1" width="13" height="18" fill="#fff" stroke="#484644" stroke-width="1.200"/><rect x="6" y="3" width="8" height="2" fill="#605e5c"/><path d="M6 8h8M6 11h8M6 14h8M6 17h8" stroke="#8a8886" stroke-dasharray="1.200 1.500"/></svg></b><span>SafetyTarget</span></li>
      <li class="frow"><i class="cb"></i><b class="fi"></b><span>Shift</span></li>
      <li class="frow"><i class="cb"></i><b class="fi"></b><span>Stock Inventory ...</span></li>
    </ul>
  </aside>
</main>

<footer class="status">
  <span class="pageof">Page 1 of 3</span>
  <div class="zoomctl">
    <span class="zm">-</span>
    <div class="slider"><i class="thumb"></i><i class="tick"></i></div>
    <span class="zp">+</span>
    <span class="zpct">72%</span>
    <svg class="fit" viewBox="0 0 20 18"><rect x="0.750" y="0.750" width="18.500" height="16.500" fill="#fff" stroke="#8a8886" stroke-width="1.500"/><path d="M6 4H3.500v3M14 4h2.500v3M6 14H3.500v-3M14 14h2.500v-3" fill="none" stroke="#484644"/></svg>
  </div>
</footer>

<footer class="taskbar">
  <div class="weather">
    <svg class="wicon" viewBox="0 0 30 30"><circle cx="14" cy="12" r="12" fill="#f2a125"/><path d="M6 28c-5 0-5-8 1-8 1-5 10-6 12-1 6-1 9 9 2 9z" fill="#bcd6f2" stroke="#fff" stroke-width=".6"/></svg>
    <div class="wtext"><span>23°C</span><span>Partly sunny</span></div>
  </div>
  <div class="slot"><svg class="tbi" viewBox="0 0 30 30"><rect x="0" y="1" width="14" height="14" rx="1.500" fill="#6fd6fb"/><rect x="15.500" y="1" width="14" height="14" rx="1.500" fill="#4ac2f6"/><rect x="0" y="16.500" width="14" height="14" rx="1.500" fill="#2fb0f3"/><rect x="15.500" y="16.500" width="14" height="14" rx="1.500" fill="#1a8cec"/></svg></div>
  <div class="tsearch">
    <svg class="tmag" viewBox="0 0 20 20"><circle cx="8.500" cy="8.500" r="7"/><path d="M13.500 13.500l5.500 5.500"/></svg>
    <span>Search</span>
    <svg class="flower" viewBox="0 0 66 34"><path d="M0 33c2-8 14-12 30-13 14 0 30 2 35 7-2 4-7 6-14 6z" fill="#b97b2e"/><path d="M24 14c-2 6-2 14 3 15h5c5-1 5-9 3-15z" fill="#4d3b77"/><path d="M16 14c3-3 8-2 10 2-3 2-8 2-10-2zM34 16c2-4 7-5 10-2-2 4-7 4-10 2z" fill="#58a845"/><circle cx="29" cy="8" r="8" fill="#f06c8e"/><circle cx="29" cy="8" r="3" fill="#f6c343"/><path d="M47 25l4-8 4 3-2 7z" fill="#aab1b8"/><path d="M53 16l7-12c2-3 5-1 4 2l-7 13z" fill="#2f8fde"/></svg>
  </div>
  <div class="slot"><svg class="tbi" viewBox="0 0 30 30"><rect x="0" y="9" width="21" height="21" rx="2" fill="#5f5f5f"/><rect x="8" y="1" width="21" height="22" rx="2" fill="#e6e6e6"/><rect x="8" y="9" width="13" height="14" fill="#b0b0b0"/></svg></div>
  <div class="slot"><svg class="tbi" viewBox="0 0 30 30"><path d="M1 14C1 5 7 0 15 0s14 5 14 14c0 9-6 14-14 14H5c-1 0-2 2-3 2 0-3-1-8-1-16z" fill="#6264c7"/><rect x="7" y="9" width="11" height="11" rx="2" fill="#fff"/><path d="M19 13l5-3v10l-5-3z" fill="#fff"/></svg></div>
  <div class="slot run"><svg class="tbi" viewBox="0 0 30 30"><path d="M0 3h11l3 3h16v22H0z" fill="#e0a210"/><path d="M0 8h30v20H0z" fill="#fdd04f"/><rect x="5" y="22" width="20" height="6" fill="#f5b61c"/><rect x="5" y="20" width="20" height="8" rx="1.500" fill="#0d7cc1"/><rect x="9" y="23" width="12" height="1.500" fill="#9fd3ef"/></svg></div>
  <div class="slot"><svg class="tbi" viewBox="0 0 30 30"><rect x="1" y="6" width="28" height="24" rx="4" fill="#f0f0f0"/><path d="M8 6V2h14v4" fill="none" stroke="#2b9be0" stroke-width="1.600"/><rect x="8.500" y="12" width="6" height="6" fill="#f25022"/><rect x="15.500" y="12" width="6" height="6" fill="#7fba00"/><rect x="8.500" y="19" width="6" height="6" fill="#00a4ef"/><rect x="15.500" y="19" width="6" height="6" fill="#ffb900"/></svg><span class="badge bg">1</span></div>
  <div class="slot run"><svg class="tbi" viewBox="0 0 30 30"><circle cx="15" cy="15" r="15" fill="#e8453c"/><path d="M15 15L2 23A15 15 0 0 0 15 30z" fill="#34a853"/><path d="M1 12c-2 7 2 14 7 17l7-14z" fill="#34a853"/><path d="M15 15h15c0 9-7 15-15 15z" fill="#fbbc05"/><circle cx="15" cy="15" r="8" fill="#fff"/><circle cx="15" cy="15" r="6.300" fill="#3b7fe6"/><circle cx="24" cy="7" r="8" fill="#8a9488" stroke="#333"/><circle cx="24" cy="6" r="4" fill="#e6e2d8"/><circle cx="25" cy="6" r="1.800" fill="#3a3a3a"/></svg></div>
  <div class="slot"><svg class="tbi" viewBox="0 0 30 30"><rect x="8" y="0.500" width="22" height="29" rx="2" fill="#1f9b63"/><rect x="19" y="0.500" width="11" height="7" fill="#33c481"/><rect x="19" y="15" width="11" height="7" fill="#107c41"/><rect x="8" y="22" width="22" height="7.500" fill="#185c37"/><rect x="0" y="6.500" width="16" height="16" rx="1" fill="#0f7143"/><text class="xlt" x="8" y="19">X</text></svg></div>
  <div class="slot pbi run wide"><svg class="tbi" viewBox="0 0 30 36"><rect x="0" y="18" width="12" height="18" rx="1" fill="#f4d76b"/><rect x="8" y="9" width="12" height="27" rx="1" fill="#edb935"/><rect x="18" y="0" width="12" height="36" rx="1" fill="#dba015"/></svg></div>
  <div class="slot"><svg class="tbi" viewBox="0 0 30 30"><rect width="30" height="30" fill="#b10e22"/><path d="M3 14c4-2 4-8 12-9 4 0 7 1 11 6l-5-1c3 3 3 6 1 8l-5-3c-5 1-8 2-14-1z" fill="#1a1417"/><path d="M0 20c8 3 16 1 24 2M0 25c8 2 16 1 20 2" stroke="#1a1417" fill="none"/></svg></div>
  <div class="slot"><svg class="tbi" viewBox="0 0 30 30"><rect width="30" height="30" rx="1" fill="#107c10"/><circle cx="15" cy="15" r="11" fill="#fff"/><path d="M15 14L9 7c3-2 9-2 12 0zM14 15l-7 9c-3-4-3-11-1-14zM16 15l7 9c3-4 3-11 1-14zM15 17l-6 8c3 2 9 2 12 0z" fill="#107c10"/></svg></div>
  <div class="slot run"><svg class="tbi" viewBox="0 0 30 30"><circle cx="15" cy="15" r="15" fill="#5865f2"/><path d="M8 10c4-2 10-2 14 0 2 3 3 7 3 11-2 1-3 2-5 2l-1-2c-3 1-5 1-8 0l-1 2c-2 0-3-1-5-2 0-4 1-8 3-11z" fill="#fff"/><ellipse cx="11.500" cy="16" rx="2" ry="2.300" fill="#5865f2"/><ellipse cx="18.500" cy="16" rx="2" ry="2.300" fill="#5865f2"/></svg><span class="badge br">9+</span></div>
  <div class="slot run"><svg class="tbi" viewBox="0 0 30 30"><circle cx="15" cy="15" r="15" fill="#1ed760"/><path d="M6 10c6-2 12-2 18 1M7 15c5-1.500 10-1.500 15 1M8 20c4-1 9-1 13 1" fill="none" stroke="#121212" stroke-width="2.400" stroke-linecap="round"/></svg></div>
  <div class="slot run"><svg class="tbi" viewBox="0 0 30 30"><path d="M12 0h6l1 4 4-1 3 5-3 3 2 4-2 4 3 3-3 5-4-1-1 4h-6l-1-4-4 1-3-5 3-3-2-4 2-4-3-3 3-5 4 1z" fill="#6e7f8e"/><circle cx="15" cy="15" r="7.500" fill="#f0f0f0"/><circle cx="15" cy="15" r="6" fill="#0e56a8"/></svg></div>

  <div class="tray">
    <svg class="up" viewBox="0 0 14 8"><path d="M1 7l6-6 6 6"/></svg>
    <div class="lang"><span>ENG</span><span>US</span></div>
    <svg class="ti wifi" viewBox="0 0 22 20"><path d="M1 7c6-6 14-6 20 0M4.500 10.500c4-4 9-4 13 0M8 14c2-2 4-2 6 0"/><circle class="wdot" cx="11" cy="17" r="1.500"/></svg>
    <svg class="ti" viewBox="0 0 22 20"><path d="M1 7v6h4l5 4V3L5 7zM14 7l6 6M20 7l-6 6"/></svg>
    <svg class="ti" viewBox="0 0 22 20"><rect x="1" y="5" width="18" height="12" rx="2.500"/><rect class="wdot" x="3" y="8" width="10" height="6"/><path d="M19 9h2v4h-2"/><path d="M8 0L4 9h5l-2 6"/></svg>
    <div class="clock"><span>8:32 PM</span><span>2023-04-14</span></div>
    <span class="notif">3</span>
  </div>
</footer>
</body>
</html>
```
FILE: styles.css
```css
*{box-sizing:border-box}
html,body{margin:0;padding:0}
body{width:1920px;height:1080px;overflow:hidden;display:flex;flex-direction:column;font-family:"Open Sans","Noto Sans",sans-serif;color:#252423;background:#f3f2f1}
svg{display:block;overflow:visible}

/* title bar */
.titlebar{height:43px;background:#3b3a39;color:#fff;display:flex;align-items:center;flex:none}
.qat{display:flex;gap:19px;padding-left:22px;width:770px;flex:none}
.qi{width:18px;height:18px;fill:none;stroke:#fff;stroke-width:1.300}
.qi.dim{stroke:#8a8886}
.wintitle{font-size:14.500px;width:450px;white-space:nowrap;letter-spacing:-.17px;flex:none}
.winright{flex:none;width:700px;display:flex;align-items:center;padding-left:433px}
.signin{font-size:14.500px;width:58px;letter-spacing:-.2px;flex:none;white-space:nowrap}
.avatar{width:25px;height:25px;margin-right:-2px;flex:none}
.wb{width:13px;height:13px;fill:none;stroke:#fff;stroke-width:1;margin-left:42px;flex:none}

/* menu tabs */
.menutabs{height:45px;background:#f3f2f1;display:flex;flex:none;font-size:17.500px;color:#323130;letter-spacing:-.4px}
.mt{line-height:39px;height:38px;white-space:nowrap}
.mt-file{margin-left:28px;width:73px}
.mt-home{width:87px;font-weight:600;font-size:17px;color:#252423;position:relative}
.mt-home::after{content:"";position:absolute;left:0;width:48px;top:35px;height:3px;background:#117865}
.mt-insert{width:83px}
.mt-modeling{width:113px}
.mt-view{width:76px}
.mt-optimize{width:110px}

/* ribbon */
.ribbon{height:112px;background:#f3f2f1;display:flex;flex:none;position:relative;z-index:3;box-shadow:0 2px 4px rgba(0,0,0,.18);font-size:14px;color:#323130;letter-spacing:-.32px}
.group{display:flex;flex-direction:column;height:110px;border-right:1px solid #c8c6c4;flex:none}
.g-clip{width:201px}
.g-data{width:431px}
.g-query{width:145px}
.g-insert{width:183px}
.g-calc{width:143px}
.g-sens{width:92px}
.g-share{width:70px;border-right:0}
.gbody{flex:1;display:flex;min-height:0}
.pad10{padding-left:10px}
.pad7{padding-left:7px}
.pad6{padding-left:6px}
.pad5{padding-left:5px}
.glabel{height:18px;line-height:18px;text-align:center;font-size:12px;color:#484644;letter-spacing:0;margin-bottom:-3px;flex:none}
.rb{display:flex;flex-direction:column;align-items:center;padding-top:8px;text-align:center;line-height:20px;flex:none}
.rb span{margin-top:3px;white-space:nowrap}
.off{color:#a19f9d}
.ri{width:38px;height:38px}
.w48{width:48px}.w50{width:50px}.w52{width:52px}.w54{width:54px}.w56{width:56px}.w58{width:58px}.w60{width:60px}.w62{width:62px}.w64{width:64px}.w68{width:68px}.w76{width:76px}.w82{width:82px}
.chev{display:inline-block;width:8px;height:5px;margin-left:3px;vertical-align:2px;fill:none;stroke:#323130;stroke-width:1.200}
.off .chev{stroke:#a19f9d;margin-left:0}
.clipcol{margin-left:5px;display:flex;flex-direction:column;padding-top:4px;gap:9px;font-size:14.500px;letter-spacing:-.25px}
.cliprow{display:flex;align-items:center;height:21px;gap:7px;white-space:nowrap}
.si{width:18px;height:18px}
.ik{fill:none;stroke:#484644;stroke-width:1.600}
.ik.thin{stroke-width:1}
.ik.gy{stroke:#605e5c}
.wf,.ik.wf{fill:#fff}
.blue{fill:none;stroke:#2b88d8;stroke-width:1.500}
.blue.wf{fill:#fff}
.or{fill:none;stroke:#d86c00;stroke-width:1.500}
.or.wf{fill:#fff}
.gr{fill:none;stroke:#3f9f5c;stroke-width:1.800}
.ixl{font:700 13px "Open Sans",sans-serif;fill:#fff;text-anchor:middle}
.ia{font:400 26px "Open Sans",sans-serif;fill:#2b88d8;text-anchor:middle}
.collapse{position:absolute;left:1902px;top:98px;width:12px;height:8px;fill:none;stroke:#484644;stroke-width:1.400}

/* workspace */
.workspace{flex:none;height:790px;display:flex;width:1920px}
.mainleft{width:1469px;display:flex;flex-direction:column;flex:none}
.mainrow{height:746px;display:flex;flex:none}
.rail{width:52px;background:#f3f2f1;border-right:1px solid #e1dfdd;flex:none}
.railitem{height:50px;display:flex;align-items:center;justify-content:center;position:relative}
.railitem.active::before{content:"";position:absolute;left:0;top:2px;bottom:4px;width:3px;background:#117865}
.rali{width:20px;height:20px}
.canvasarea{width:1165px;background:#fff;padding-left:5px;flex:none;overflow:hidden}
.canvas{position:relative;width:1154px;height:649px;border:2px dotted #3f3f3f;border-top:0;background:#fff}
.grid{position:absolute;left:0;top:0;width:1150px;height:648px}
.reporttitle{position:absolute;left:281px;top:0;width:497px;height:62px;margin:0;padding-left:91px;background:#fff;text-align:center;font-size:27.500px;font-weight:400;line-height:50px;color:#252423;letter-spacing:-.2px;white-space:nowrap}
.visual{position:absolute;background:#fff;overflow:hidden}
.v-c1{left:15px;top:62px;width:372px;height:276px}
.v-c2{left:15px;top:352px;width:372px;height:273px}
.v-k1{left:404px;top:62px;width:313px;height:238px}
.v-k2{left:393px;top:337px;width:324px;height:250px}
.vt{font:14px Roboto,sans-serif;fill:#252423;letter-spacing:.4px}
.gl{stroke:#c8c6c4;stroke-width:1;stroke-dasharray:1 4;fill:none}
.yl text{font:12px Roboto,sans-serif;fill:#706e6c;text-anchor:end}
.lb text{font:12px Roboto,sans-serif;fill:#706e6c;text-anchor:middle}
.xl text{font:12px Roboto,sans-serif;fill:#706e6c;text-anchor:middle}
.bar rect{fill:#118dff;stroke:#6ebaff;stroke-width:.8}
.dash{stroke:#8ac6ff;stroke-width:2;stroke-dasharray:5.500 3.500;fill:none}
.at{font:13px Roboto,sans-serif;fill:#252423;letter-spacing:.2px}
.mid{text-anchor:middle}
.area{fill:#f6d9de}
.kpi{font:47px Roboto,sans-serif;fill:#d64554;text-anchor:middle}
.bang{font:11px Roboto,sans-serif;fill:#d64554;text-anchor:middle}
.goal{font:14px Roboto,sans-serif;fill:#484644;text-anchor:middle}

/* filters */
.filters{width:252px;background:#fff;border-left:1px solid #c8c6c4;border-right:1px solid #c8c6c4;flex:none;position:relative;z-index:1}
.fhead{height:50px;display:flex;align-items:center;padding-left:14px}
.funnel{width:21px;height:19px;fill:none;stroke:#252423;stroke-width:1.500}
.ftitle{font-size:19px;font-weight:600;margin-left:10px;width:138px;color:#252423;letter-spacing:-.3px}
.eye{width:15px;height:12px;fill:none;stroke:#252423;stroke-width:1.300;margin-right:23px}
.dchev{width:16px;height:14px;fill:none;stroke:#252423;stroke-width:1.300}
.fsearchwrap{padding:7px 0 5px 10px;border-bottom:1px solid #c8c6c4;height:51px}
.fsearch{width:224px;height:38px;border:1px solid #a19f9d;border-radius:2px;display:flex;align-items:center;padding-left:13px;font-size:15px;color:#484644}
.fsearch span{margin-left:18px}
.mag{width:18px;height:18px;fill:none;stroke:#323130;stroke-width:1.200}
.flabel{display:flex;justify-content:space-between;padding:0 13px 0 10px;height:20px;line-height:20px;font-size:14px;color:#484644;letter-spacing:-.1px}
.flabel b{font-weight:400;letter-spacing:2px;line-height:26px}
.fl1{margin-top:21px}
.fl2{margin-top:34px}
.fbox{margin:11px 0 0 10px;width:230px;height:57px;border:1px solid #c8c6c4;border-radius:2px;display:flex;align-items:center;justify-content:center;font-size:14.300px;color:#323130;letter-spacing:-.08px}

/* page tabs */
.pagetabs{height:44px;display:flex;flex:none;background:#f3f2f1;border-right:1px solid #e1dfdd;font-size:14.500px;color:#323130;letter-spacing:-.2px}
.ptrail{width:51px;border-right:1px solid #e1dfdd;flex:none}
.ptnav{width:50px;display:flex;align-items:center;gap:20px;padding-left:6px;flex:none}
.ptnav svg{width:7px;height:11px;fill:#c8c6c4}
.ptab{display:flex;align-items:center;justify-content:center;border-left:1px solid #c8c6c4;flex:none;position:relative;padding-bottom:2px}
.cur{width:125px;background:#fff;border-bottom:5px solid #117865;font-weight:600;font-size:14.500px;letter-spacing:-.28px;color:#252423;padding:3px 0 0}
.t2{width:180px}
.t3{width:111px;border-right:1px solid #c8c6c4}
.ptx{position:absolute;right:4px;top:2px;font-size:13px;font-weight:600;line-height:16px;letter-spacing:0}
.ptadd{width:49px;height:40px;margin:2px 0 0 1px;background:#117865;display:flex;align-items:center;justify-content:center;flex:none}
.ptadd svg{width:14px;height:14px;fill:none;stroke:#fff;stroke-width:3}

/* visualizations */
.viz{width:226px;background:#f3f2f1;border-right:1px solid #e1dfdd;flex:none;position:relative}
.phead{height:48px;display:flex;align-items:center;justify-content:space-between;padding:1px 10px 0 10px}
.ptitle{font-size:19px;font-weight:600;color:#252423;letter-spacing:-.25px}
.buildlabel{padding-left:10px;font-size:14.500px;font-weight:600;line-height:20px;color:#323130;letter-spacing:-.2px}
.panetabs{height:55px;margin-top:4px;border-bottom:1px solid #a19f9d;position:relative;display:flex;padding-left:10px}
.panesel{width:40px;height:40px;background:#d2d0ce;border-radius:2px;padding:4px}
.panesel svg{width:32px;height:32px}
.panefmt{width:30px;height:30px;margin:5px 0 0 48px}
.caret{position:absolute;left:24px;top:45px;width:14px;height:14px;background:#f3f2f1;border-left:1px solid #a19f9d;border-top:1px solid #a19f9d;transform:rotate(45deg) scale(.99)}
.vgrid{display:grid;grid-template-columns:repeat(6,35px);grid-auto-rows:35px;padding:8px 0 0 8px;align-items:center;justify-items:center;height:259px;border-bottom:1px solid #e1dfdd;align-content:start}
.vi{width:23px;height:23px}
.k{fill:none;stroke:#484644;stroke-width:1.400}
.k.th16{stroke-width:1.600}
.k.th2{stroke-width:2}
.k.lg{stroke:#8a8886}
.b{fill:none;stroke:#1e72b5;stroke-width:1.400}
.fb{fill:#77b5e8;stroke:#1e72b5;stroke-width:1.200}
.fg{fill:#bebbb8;stroke:#8a8886;stroke-width:1.100}
.fw{fill:#fff;stroke:#484644;stroke-width:1.100}
.fw.gs{stroke:#605e5c}
.k.wfill,.b.wfill{fill:#fff}
.b.lf{fill:#77b5e8}
.v123{font:600 11px "Open Sans",sans-serif;fill:#2b88d8;text-anchor:middle}
.vr{font:700 21px "Open Sans",sans-serif;fill:#1e72b5;text-anchor:middle}
.vpy{font:700 21px "Open Sans",sans-serif;fill:#1e72b5;text-anchor:middle;letter-spacing:-.5px}
.vmore{font-size:16px;line-height:10px;letter-spacing:3px;color:#323130;margin-top:-4px}
.vfields{padding:12px 8px 0 15px;font-size:14px;color:#484644;letter-spacing:-.1px}
.vlabel{line-height:20px;height:20px;color:#484644}
.drop{margin-left:-10px;width:213px;background:#fff;border:1px dashed #c8c6c4;display:flex;align-items:center;color:#323130;white-space:nowrap}
.d1{margin-top:6px;height:35px;padding-left:13px;font-size:14.300px;letter-spacing:-.08px}
.drillh{margin-top:13px;font-weight:600;font-size:14.300px}
.togrow{display:flex;align-items:center;justify-content:space-between;height:30px;margin-right:-1px}
.r1{margin-top:6px}
.r2{margin-top:4px}
.toggle{width:40px;height:20px;border-radius:10px;display:flex;align-items:center;font-size:10.500px;letter-spacing:0;flex:none;padding:0 5px}
.toggle i{width:10px;height:10px;border-radius:50%;display:block;flex:none}
.offt{background:#fff;border:1px solid #8a8886;color:#605e5c;gap:2px}
.offt i{background:#484644}
.ont{background:#484644;color:#fff;justify-content:space-between}
.ont i{background:#fff}
.d2{margin-top:8px;height:32px;padding-left:10px;font-size:14.500px;letter-spacing:-.1px}

/* data */
.data{width:225px;background:#f3f2f1;flex:none;overflow:hidden}
.data .phead{height:50px;padding:0 10px 0 11px}
.dsearch{margin:7px 0 0 5px;width:215px;height:32px;background:#fff;border:1px solid #8a8886;border-radius:2px;display:flex;align-items:center;padding:1px 0 0 10px;font-size:15.500px;color:#484644}
.dsearch span{margin-left:9px}
.tree{list-style:none;margin:12px 0 0;padding:0;font-size:14.500px;color:#484644;letter-spacing:-.2px}
.trow,.frow{height:30px;display:flex;align-items:center;white-space:nowrap}
.trow{padding-left:9px}
.tw{width:12px;height:14px;fill:none;stroke:#605e5c;stroke-width:1}
.trow .tw{margin-right:7px}
.trow .tw.open{width:14px;height:12px;margin-right:6px;margin-left:-1px}
.tbl{width:16px;height:16px;fill:none;stroke:#484644;stroke-width:1;margin-right:7px}
.tbl .hdr{stroke-width:2.500}
.frow{padding-left:48px}
.hasch{padding-left:28px}
.hasch .tw{margin-right:8px}
.cb{width:15px;height:15px;border:1px solid #8a8886;border-radius:2px;background:#f3f2f1;flex:none}
.fi{width:22px;height:22px;margin:0 5px;flex:none;display:block}
.fi svg{width:21px;height:21px}

/* status */
.status{height:30px;flex:none;background:#f3f2f1;border-top:1px solid #e1dfdd;display:flex;align-items:center;justify-content:space-between;padding-left:6px;font-size:14.500px;color:#605e5c;letter-spacing:-.1px}
.zoomctl{display:flex;align-items:center;padding-right:29px;margin-top:-1px}
.zm{font-weight:600;width:8px;text-align:center;font-size:16px}
.slider{width:122px;height:1.500px;background:#605e5c;margin:0 8px 0 5px;position:relative}
.thumb{position:absolute;left:39px;top:-7px;width:5px;height:15px;background:#605e5c}
.tick{position:absolute;left:61px;top:-4px;width:1.500px;height:9px;background:#605e5c}
.zp{font-size:19px;line-height:20px;width:10px;text-align:center}
.zpct{margin-left:21px;width:53px;font-size:14px}
.fit{width:20px;height:18px}

/* taskbar */
.taskbar{height:60px;flex:none;background:#1c1c1c;border-top:1px solid #2e2e2e;display:flex;align-items:center;color:#fff}
.weather{width:462px;display:flex;align-items:center;padding-left:27px;flex:none}
.wicon{width:29px;height:29px;margin-right:8px}
.wtext{display:flex;flex-direction:column;font-size:14.500px;line-height:20px;letter-spacing:-.1px}
.wtext span:last-child{color:#d8d8d8}
.slot{width:55px;height:59px;display:flex;align-items:center;justify-content:center;position:relative;flex:none}
.tbi{width:30px;height:30px}
.pbi .tbi{height:36px}
.run::after{content:"";position:absolute;left:50%;margin-left:-4px;bottom:5px;width:8px;height:3px;border-radius:2px;background:#9a9a9a}
.wide::before{content:"";position:absolute;left:3px;right:4px;top:4px;bottom:4px;background:#2d2d2d;border:1px solid #333;border-radius:4px;z-index:0}
.wide svg{position:relative;z-index:1}
.wide::after{width:20px;margin-left:-10px;background:#a5a5a5;z-index:1}
.tsearch{margin:0 3px 0 5px;width:274px;height:40px;background:#393939;border-radius:20px;display:flex;align-items:center;padding-left:14px;flex:none;font-size:16px;color:#d8d8d8;position:relative}
.tmag{width:18px;height:18px;fill:none;stroke:#e6e6e6;stroke-width:1.800;margin-right:13px}
.flower{position:absolute;left:202px;top:4px;width:65px;height:34px}
.xlt{font:700 12px "Open Sans",sans-serif;fill:#fff;text-anchor:middle}
.badge{position:absolute;top:8px;height:20px;min-width:20px;border-radius:10px;font-size:13px;line-height:20px;text-align:center}
.bg{left:36px;background:#a19f9d;color:#252423;font-size:15px}
.br{left:34px;background:#e8585a;color:#fff}
.tray{margin-left:137px;display:flex;align-items:center;font-size:14px;letter-spacing:-.1px}
.up{width:14px;height:8px;fill:none;stroke:#fff;stroke-width:1.800;margin-right:15px}
.lang{width:50px;display:flex;flex-direction:column;align-items:center;line-height:20px}
.ti{width:22px;height:20px;fill:none;stroke:#fff;stroke-width:1.300;margin-left:8px}
.wifi{margin-left:11px}
.wdot{fill:#fff;stroke:none}
.clock{width:91px;margin-left:6px;display:flex;flex-direction:column;align-items:flex-end;line-height:20px;white-space:nowrap}
.notif{width:20px;height:20px;border-radius:50%;background:#a19f9d;color:#252423;text-align:center;line-height:20px;font-size:12px;margin-left:9px}
```
